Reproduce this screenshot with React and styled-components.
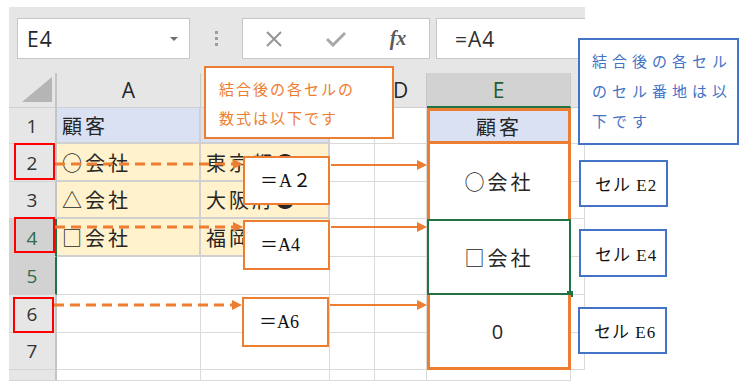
import React from 'react';
import styled, { createGlobalStyle, css } from 'styled-components';

const ORANGE = '#ed7d31';
const BLUE = '#4472c4';
const GREEN = '#217346';
const RED = '#ff0000';

const GlobalStyle = createGlobalStyle`
  html, body {
    margin: 0;
    padding: 0;
    background: #fff;
  }
  body {
    font-family: "Noto Sans CJK JP", sans-serif;
  }
  * {
    box-sizing: border-box;
  }
`;

const Root = styled.div`
  position: relative;
  width: 742px;
  height: 381px;
  overflow: hidden;
  background: #fff;
  padding: 7px 0 0 9px;
`;

const Sheet = styled.div`
  width: 576px;
  height: 374px;
  background: #e6e6e6;
  display: flex;
  flex-direction: column;
`;

const FormulaBar = styled.div`
  display: flex;
  align-items: flex-start;
  height: 66px;
  padding: 11px 0 0 8px;
`;

const Box = styled.div`
  height: 41px;
  background: #fff;
  border: 1px solid #c6c6c6;
  display: flex;
  align-items: center;
`;

const NameBox = styled(Box)`
  width: 173px;
  justify-content: space-between;
  padding: 0 11px 0 9px;
  font-family: "Open Sans", sans-serif;
  font-size: 21px;
  letter-spacing: 1px;
  color: #262626;
`;

const Caret = styled.span`
  width: 0;
  height: 0;
  border-left: 4px solid transparent;
  border-right: 4px solid transparent;
  border-top: 4px solid #6f6f6f;
`;

const Grip = styled.div`
  width: 52px;
  height: 41px;
  display: flex;
  flex-direction: column;
  align-items: center;
  justify-content: center;
  gap: 3px;

  span {
    width: 3px;
    height: 3px;
    background: #9d9d9d;
  }
`;

const FxBox = styled(Box)`
  width: 188px;
`;

const FxSlot = styled.div`
  width: 62px;
  display: flex;
  justify-content: center;
  align-items: center;
`;

const FxLabel = styled.span`
  font-family: "Liberation Serif", serif;
  font-style: italic;
  font-weight: bold;
  font-size: 20px;
  color: #5a5a5a;
`;

const Input = styled(Box)`
  flex: 1;
  margin-left: 6px;
  border-right: none;
  padding-left: 18px;
  font-family: "Open Sans", sans-serif;
  font-size: 21px;
  letter-spacing: 1px;
  color: #303030;
`;

const Grid = styled.div`
  display: grid;
  grid-template-columns: 48px 144px 129px 45px 52px 144px 14px;
  grid-template-rows: 35px 36px 38px 37px 38px 38px 38px 37px 11px;
  background: #fff;
`;

const Corner = styled.div`
  background: #e6e6e6;
  border-right: 2px solid #c4c4c4;
  border-bottom: 1px solid #d0d0d0;
  display: flex;
  align-items: flex-end;
  justify-content: flex-end;
  padding: 0 3px 5px 0;

  &::after {
    content: '';
    width: 30px;
    height: 25px;
    background: #b5b5b5;
    clip-path: polygon(100% 0, 100% 100%, 0 100%);
  }
`;

const ColHead = styled.div`
  background: ${p => (p.$selected ? '#d2d2d2' : '#e6e6e6')};
  border-right: 1px solid #c8c8c8;
  border-bottom: ${p => (p.$selected ? `2px solid ${GREEN}` : '1px solid #d0d0d0')};
  color: ${p => (p.$selected ? '#1d5c35' : '#262626')};
  display: flex;
  align-items: center;
  justify-content: center;
  font-family: "Open Sans", sans-serif;
  font-size: 21px;
  overflow: hidden;
`;

const RowHead = styled.div`
  background: ${p => (p.$selected ? '#d2d2d2' : '#e6e6e6')};
  border-right: ${p => (p.$selected ? `2px solid ${GREEN}` : '2px solid #c4c4c4')};
  border-bottom: 1px solid #d4d4d4;
  color: ${p => (p.$selected ? '#2d6b4a' : '#333')};
  display: flex;
  align-items: center;
  justify-content: center;
  font-family: "Open Sans", sans-serif;
  font-size: 19px;
  overflow: hidden;
`;

const fills = {
  blue: '#d9e1f2',
  yellow: '#fff2cc',
};

const Cell = styled.div`
  background: ${p => fills[p.$fill] || '#fff'};
  border-right: 1px solid #dadada;
  border-bottom: 1px solid #dadada;
  display: flex;
  align-items: center;
  padding-left: 5px;
  font-size: 20px;
  letter-spacing: 3px;
  color: #262626;
  white-space: nowrap;
  overflow: hidden;

  ${p =>
    p.$fill &&
    css`
      border-right: 2px solid #d0d0d0;
      border-bottom: 2px solid #d0d0d0;
    `}
`;

const ECell = styled.div`
  position: relative;
  grid-row: span ${p => p.$span || 1};
  display: flex;
  align-items: center;
  justify-content: center;
  font-size: 20px;
  letter-spacing: 3px;
  color: #262626;
  background: #fff;

  ${p =>
    p.$kind === 'head' &&
    css`
      background: ${fills.blue};
      border: 3px solid ${ORANGE};
    `}
  ${p =>
    p.$kind === 'body' &&
    css`
      border-left: 3px solid ${ORANGE};
      border-right: 3px solid ${ORANGE};
    `}
  ${p =>
    p.$kind === 'last' &&
    css`
      border-left: 3px solid ${ORANGE};
      border-right: 3px solid ${ORANGE};
      border-bottom: 3px solid ${ORANGE};
      font-family: "Open Sans", sans-serif;
      font-size: 20px;
    `}
  ${p =>
    p.$kind === 'selected' &&
    css`
      border: 2px solid ${GREEN};

      &::after {
        content: '';
        position: absolute;
        right: -4px;
        bottom: -4px;
        width: 6px;
        height: 6px;
        background: ${GREEN};
      }
    `}
`;

const Note = styled.div`
  position: absolute;
  left: ${p => p.$x}px;
  top: ${p => p.$y}px;
  width: ${p => p.$w}px;
  height: ${p => p.$h}px;
  border: 2px solid ${p => p.$color};
  background: ${p => (p.$clear ? 'transparent' : '#fff')};
  white-space: nowrap;
`;

const OrangeNote = styled(Note)`
  padding: 6px 0 0 13px;
  color: ${ORANGE};
  font-size: 15px;
  letter-spacing: 2px;
  line-height: 29px;
`;

const BlueNote = styled(Note)`
  padding: 6px 0 0 12px;
  color: ${BLUE};
  font-size: 15px;
  letter-spacing: 5px;
  line-height: 30px;
`;

const Tag = styled(Note)`
  display: flex;
  align-items: center;
  padding: 0 0 ${p => p.$lift || 0}px ${p => p.$pad}px;
  color: #111;
  font-family: "Liberation Serif", "Noto Sans CJK JP", serif;
  font-size: ${p => p.$size}px;
  letter-spacing: ${p => p.$spacing}px;
`;

const Arrows = styled.svg`
  position: absolute;
  left: 0;
  top: 0;
  pointer-events: none;
`;

const Arrow = ({ x1, x2, y, dashed }) => (
  <g>
    <line
      x1={x1}
      y1={y}
      x2={x2 - 8}
      y2={y}
      stroke={ORANGE}
      strokeWidth={dashed ? 3 : 2}
      strokeDasharray={dashed ? '10 6' : undefined}
    />
    <polygon points={`${x2 - 10},${y - 5} ${x2},${y} ${x2 - 10},${y + 5}`} fill={ORANGE} />
  </g>
);

const columns = ['A', 'B', 'C', 'D', 'E', 'F'];

const rows = [
  { n: 1, a: '顧客', b: '', fill: 'blue', e: { kind: 'head', text: '顧客' } },
  { n: 2, a: '○会社', b: '東京都●', fill: 'yellow', e: { kind: 'body', text: '○会社', span: 2 } },
  { n: 3, a: '△会社', b: '大阪府●', fill: 'yellow' },
  { n: 4, a: '□会社', b: '福岡県●', fill: 'yellow', selected: true, e: { kind: 'selected', text: '□会社', span: 2 } },
  { n: 5, selected: true },
  { n: 6, e: { kind: 'last', text: '0', span: 2 } },
  { n: 7 },
  { n: 8 },
];

export default function App() {
  return (
    <>
      <GlobalStyle />
      <Root>
        <Sheet>
          <FormulaBar>
            <NameBox>
              E4
              <Caret />
            </NameBox>
            <Grip>
              <span />
              <span />
              <span />
            </Grip>
            <FxBox>
              <FxSlot>
                <svg width="18" height="18" viewBox="0 0 18 18">
                  <path d="M2 2 L16 16 M16 2 L2 16" stroke="#959595" strokeWidth="2" fill="none" />
                </svg>
              </FxSlot>
              <FxSlot>
                <svg width="20" height="16" viewBox="0 0 20 16">
                  <path d="M1 8 L7 14 L19 2" stroke="#a8a8a8" strokeWidth="3" fill="none" />
                </svg>
              </FxSlot>
              <FxSlot>
                <FxLabel>fx</FxLabel>
              </FxSlot>
            </FxBox>
            <Input>=A4</Input>
          </FormulaBar>
          <Grid>
            <Corner />
            {columns.map(c => (
              <ColHead key={c} $selected={c === 'E'}>
                {c === 'F' ? '' : c}
              </ColHead>
            ))}
            {rows.map(r => (
              <React.Fragment key={r.n}>
                <RowHead $selected={r.selected}>{r.n === 8 ? '' : r.n}</RowHead>
                <Cell $fill={r.fill}>{r.a}</Cell>
                <Cell $fill={r.fill}>{r.b}</Cell>
                <Cell />
                <Cell />
                {r.e && (
                  <ECell $kind={r.e.kind} $span={r.e.span}>
                    {r.e.text}
                  </ECell>
                )}
                <Cell />
              </React.Fragment>
            ))}
          </Grid>
        </Sheet>

        <Arrows width="742" height="381">
          <Arrow x1={55} x2={243} y={164} dashed />
          <Arrow x1={55} x2={243} y={227} dashed />
          <Arrow x1={54} x2={242} y={305} dashed />
          <Arrow x1={331} x2={427} y={165} />
          <Arrow x1={331} x2={427} y={227} />
          <Arrow x1={330} x2={427} y={305} />
        </Arrows>

        <OrangeNote $x={204} $y={66} $w={190} $h={73} $color={ORANGE}>
          結合後の各セルの
          <br />
          数式は以下です
        </OrangeNote>

        <BlueNote $x={578} $y={38} $w={161} $h={107} $color={BLUE}>
          結合後の各セル
          <br />
          のセル番地は以
          <br />
          下です
        </BlueNote>

        <Tag $x={243} $y={156} $w={87} $h={49} $color={ORANGE} $pad={15} $size={18} $spacing={1} $lift={4}>
          ＝A２
        </Tag>
        <Tag $x={243} $y={220} $w={87} $h={50} $color={ORANGE} $pad={15} $size={18} $spacing={0} $lift={4}>
          ＝A4
        </Tag>
        <Tag $x={242} $y={297} $w={87} $h={50} $color={ORANGE} $pad={15} $size={18} $spacing={0} $lift={4}>
          ＝A6
        </Tag>

        <Tag $x={579} $y={160} $w={89} $h={47} $color={BLUE} $pad={14} $size={17} $spacing={1}>
          セル E2
        </Tag>
        <Tag $x={579} $y={229} $w={88} $h={48} $color={BLUE} $pad={14} $size={17} $spacing={1}>
          セル E4
        </Tag>
        <Tag $x={578} $y={307} $w={89} $h={47} $color={BLUE} $pad={14} $size={17} $spacing={1}>
          セル E6
        </Tag>

        <Note $x={14} $y={143} $w={41} $h={37} $color={RED} $clear />
        <Note $x={14} $y={217} $w={41} $h={36} $color={RED} $clear />
        <Note $x={13} $y={297} $w={41} $h={36} $color={RED} $clear />
      </Root>
    </>
  );
}
